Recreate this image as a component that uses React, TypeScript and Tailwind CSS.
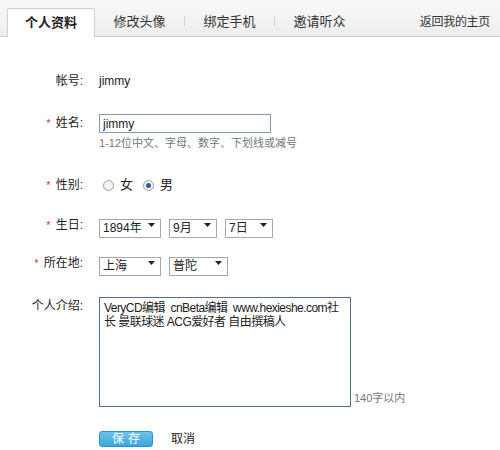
import { useState } from "react";

// 个人资料编辑页 — 顶部标签栏 + 表单
const FONT = "font-['Liberation_Sans','Noto_Sans_CJK_SC',sans-serif]";

const tabs = ["个人资料", "修改头像", "绑定手机", "邀请听众"];

function Label({ text, required }: { text: string; required?: boolean }) {
  return (
    <div className="w-[86px] shrink-0 text-right text-[12px] leading-[18px] text-[#222] pr-[3px]">
      {required && <span className="text-[#d9372b] mr-[5px] text-[11px]">*</span>}
      {text}:
    </div>
  );
}

function Radio({ checked, label, onClick }: { checked: boolean; label: string; onClick: () => void }) {
  return (
    <button type="button" onClick={onClick} className="flex items-center gap-[6px] text-[13px] text-[#222]">
      <span className="w-[11px] h-[11px] rounded-full border border-[#a0a0a0] bg-[#f4f4f4] flex items-center justify-center">
        {checked && <span className="w-[5px] h-[5px] rounded-full bg-[#1f5fae]" />}
      </span>
      {label}
    </button>
  );
}

function Select({ value, width, options }: { value: string; width: string; options: string[] }) {
  return (
    <div className={`relative h-[19px] ${width}`}>
      <select
        defaultValue={value}
        className="appearance-none w-full h-full border border-[#a7a7a7] bg-white pl-[3px] text-[12px] leading-[17px] text-[#222] outline-none"
      >
        {options.map((o) => (
          <option key={o}>{o}</option>
        ))}
      </select>
      <svg className="absolute right-[6px] top-[8px] pointer-events-none" width="7" height="4" viewBox="0 0 7 4">
        <path d="M0 0h7L3.5 4z" fill="#222" />
      </svg>
    </div>
  );
}

export default function App() {
  const [sex, setSex] = useState<"f" | "m">("m");

  return (
    <div className={`w-[500px] h-[450px] bg-white overflow-hidden ${FONT}`}>
      <div className="h-[37px] bg-gradient-to-b from-[#f9f9f9] to-[#ededed] border-b border-[#cfcfcf] flex items-end pl-[7px] pr-[10px]">
        {tabs.map((t, i) => (
          <div key={t} className="flex items-end">
            {i > 1 && <span className="w-px h-[10px] bg-[#d6d6d6] mb-[10px]" />}
            {i === 0 ? (
              <div className="w-[88px] h-[29px] -mb-px bg-white border border-b-0 border-[#cfcfcf] rounded-t-[2px] flex items-center justify-center text-[13px] font-bold text-[#222]">
                {t}
              </div>
            ) : (
              <div className="w-[89px] h-[29px] flex items-center justify-center text-[13px] text-[#333]">{t}</div>
            )}
          </div>
        ))}
        <div className="ml-auto h-[29px] flex items-center text-[12px] tracking-[-0.3px] text-[#333]">返回我的主页</div>
      </div>

      <div className="pt-[35px] flex flex-col">
        <div className="flex items-center h-[18px]">
          <Label text="帐号" />
          <div className="pl-[13px] text-[12px] text-[#222]">jimmy</div>
        </div>

        <div className="flex mt-[24px]">
          <Label text="姓名" required />
          <div className="pl-[13px] flex flex-col">
            <input
              defaultValue="jimmy"
              className="w-[172px] h-[19px] border border-[#7f9db9] px-[3px] text-[12px] text-[#222] outline-none"
            />
            <div className="mt-[3px] text-[11px] leading-[14px] text-[#777]">1-12位中文、字母、数字、下划线或减号</div>
          </div>
        </div>

        <div className="flex items-center mt-[26px] h-[18px]">
          <Label text="性别" required />
          <div className="pl-[17px] flex items-center gap-[10px]">
            <Radio checked={sex === "f"} label="女" onClick={() => setSex("f")} />
            <Radio checked={sex === "m"} label="男" onClick={() => setSex("m")} />
          </div>
        </div>

        <div className="flex items-center mt-[21px] h-[19px]">
          <Label text="生日" required />
          <div className="pl-[13px] flex items-center gap-[8px]">
            <Select value="1894年" width="w-[62px]" options={["1894年", "1895年", "1990年"]} />
            <Select value="9月" width="w-[48px]" options={["9月", "10月"]} />
            <Select value="7日" width="w-[48px]" options={["7日", "8日"]} />
          </div>
        </div>

        <div className="flex items-center mt-[19px] h-[19px]">
          <Label text="所在地" required />
          <div className="pl-[13px] flex items-center gap-[8px]">
            <Select value="上海" width="w-[62px]" options={["上海", "北京"]} />
            <Select value="普陀" width="w-[59px]" options={["普陀", "徐汇"]} />
          </div>
        </div>

        <div className="flex mt-[25px]">
          <Label text="个人介绍" />
          <div className="pl-[13px] flex items-end">
            <textarea
              defaultValue="VeryCD编辑  cnBeta编辑  www.hexieshe.com社长 曼联球迷 ACG爱好者 自由撰稿人"
              className="w-[252px] h-[110px] border border-[#52708e] px-[4px] py-[3px] text-[12px] leading-[14px] tracking-[-0.55px] text-[#222] break-all resize-none outline-none"
            />
            <span className="ml-[3px] mb-[1px] text-[11px] text-[#777]">140字以内</span>
          </div>
        </div>

        <div className="flex items-center mt-[23px] pl-[99px] gap-[18px]">
          <button
            type="button"
            className="w-[54px] h-[16px] rounded-[3px] border border-[#2d8fc6] bg-gradient-to-b from-[#6cc4ee] to-[#3aa6dc] text-white text-[12px] leading-[14px] tracking-[4px] pl-[4px]"
          >
            保存
          </button>
          <span className="text-[12px] text-[#222]">取消</span>
        </div>
      </div>
    </div>
  );
}
